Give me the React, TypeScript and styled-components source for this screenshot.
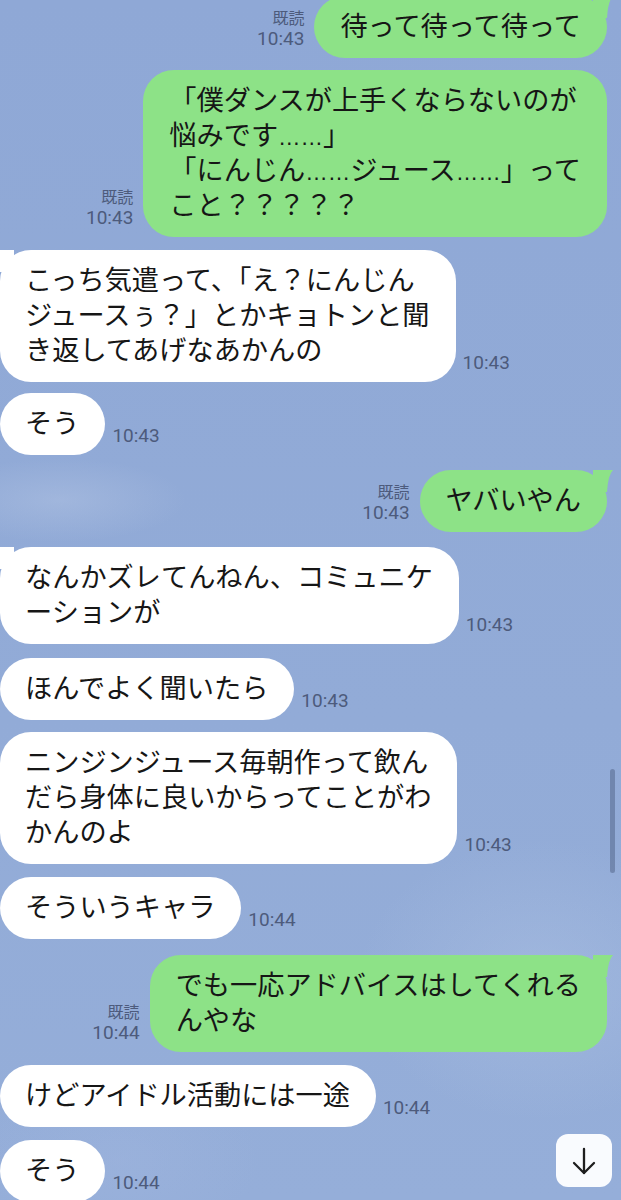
import React from "react";
import styled, { createGlobalStyle } from "styled-components";

const Global = createGlobalStyle`
  html, body { margin: 0; padding: 0; overflow: hidden; background: #91aad7; }
  * { box-sizing: border-box; }
`;

type Msg = {
  me: boolean;
  lines: string[];
  time: string;
  read?: boolean;
  tail?: boolean;
  gap: number;
};

const messages: Msg[] = [
  { me: true, lines: ["待って待って待って"], time: "10:43", read: true, tail: true, gap: 0 },
  {
    me: true,
    lines: ["「僕ダンスが上手くならないのが", "悩みです……」", "「にんじん……ジュース……」って", "こと？？？？？"],
    time: "10:43",
    read: true,
    gap: 12,
  },
  {
    me: false,
    lines: ["こっち気遣って、「え？にんじん", "ジュースぅ？」とかキョトンと聞", "き返してあげなあかんの"],
    time: "10:43",
    tail: true,
    gap: 13,
  },
  { me: false, lines: ["そう"], time: "10:43", gap: 11 },
  { me: true, lines: ["ヤバいやん"], time: "10:43", read: true, tail: true, gap: 15 },
  { me: false, lines: ["なんかズレてんねん、コミュニケ", "ーションが"], time: "10:43", tail: true, gap: 15 },
  { me: false, lines: ["ほんでよく聞いたら"], time: "10:43", gap: 14 },
  {
    me: false,
    lines: ["ニンジンジュース毎朝作って飲ん", "だら身体に良いからってことがわ", "かんのよ"],
    time: "10:43",
    gap: 12,
  },
  { me: false, lines: ["そういうキャラ"], time: "10:44", gap: 13 },
  { me: true, lines: ["でも一応アドバイスはしてくれる", "んやな"], time: "10:44", read: true, tail: true, gap: 16 },
  { me: false, lines: ["けどアイドル活動には一途"], time: "10:44", gap: 13 },
  { me: false, lines: ["そう"], time: "10:44", gap: 13 },
];

const Screen = styled.div`
  position: relative;
  width: 621px;
  height: 1200px;
  overflow: hidden;
  background:
    radial-gradient(ellipse 180px 60px at 60px 500px, rgba(190, 205, 232, 0.35), transparent 70%),
    radial-gradient(ellipse 260px 200px at 540px 980px, rgba(175, 195, 228, 0.45), transparent 70%),
    radial-gradient(ellipse 200px 120px at 120px 1160px, rgba(165, 185, 225, 0.3), transparent 70%),
    linear-gradient(180deg, #8fa8d6 0%, #92abd7 60%, #95aed9 100%);
`;

const Thread = styled.div`
  display: flex;
  flex-direction: column;
  margin-top: -4px;
`;

const Row = styled.div<{ $me: boolean; $gap: number }>`
  display: flex;
  flex-direction: ${(p) => (p.$me ? "row-reverse" : "row")};
  align-items: flex-end;
  justify-content: flex-start;
  gap: ${(p) => (p.$me ? 10 : 7)}px;
  margin-top: ${(p) => p.$gap}px;
  padding: ${(p) => (p.$me ? "0 14px 0 0" : "0")};
`;

const Bubble = styled.div<{ $me: boolean }>`
  position: relative;
  background: ${(p) => (p.$me ? "#8de287" : "#ffffff")};
  color: #161616;
  border-radius: 31px;
  padding: 10.5px 26px 16.5px ${(p) => (p.$me ? "26px" : "25px")};
  font-family: "Noto Sans CJK JP", "Noto Sans", sans-serif;
  font-size: 27.2px;
  line-height: 35px;
  white-space: nowrap;
`;

const Line = styled.div`
  display: block;
  height: 35px;
`;

const Ell = styled.span`
  font-family: "Liberation Sans", Arial, sans-serif;
  font-size: 22.5px;
  line-height: 1;
`;

const Tail = styled.svg<{ $me: boolean }>`
  position: absolute;
  top: 0;
  ${(p) => (p.$me ? "right: -6px;" : "left: -6px;")}
  width: 20px;
  height: 22px;
  fill: ${(p) => (p.$me ? "#8de287" : "#ffffff")};
`;

const Meta = styled.div<{ $me: boolean }>`
  display: flex;
  flex-direction: column;
  align-items: ${(p) => (p.$me ? "flex-end" : "flex-start")};
  padding-bottom: 8px;
  color: #4d5b7c;
`;

const Read = styled.span`
  font-family: "Noto Sans CJK JP", sans-serif;
  font-size: 16px;
  line-height: 22px;
`;

const Time = styled.span`
  font-family: "Roboto", "Liberation Sans", sans-serif;
  font-size: 19px;
  line-height: 22px;
`;

const ScrollDown = styled.div`
  position: absolute;
  left: 556px;
  top: 1134px;
  width: 56px;
  height: 53px;
  border-radius: 12px;
  background: rgba(252, 253, 255, 0.97);
  display: flex;
  align-items: center;
  justify-content: center;
  color: #1e1e1e;
`;

const ScrollThumb = styled.div`
  position: absolute;
  left: 610px;
  top: 769px;
  width: 5px;
  height: 104px;
  border-radius: 3px;
  background: rgba(72, 88, 125, 0.45);
`;

function renderLine(text: string) {
  const parts = text.split(/(…+)/);
  return parts.map((p, i) => (p.startsWith("…") ? <Ell key={i}>{p}</Ell> : <React.Fragment key={i}>{p}</React.Fragment>));
}

function Message({ m }: { m: Msg }) {
  return (
    <Row $me={m.me} $gap={m.gap}>
      <Bubble $me={m.me}>
        {m.tail && (
          <Tail $me={m.me} viewBox="0 0 20 22">
            {m.me ? <path d="M0 0 H20 Q15 5 14 22 H0 Z" /> : <path d="M20 0 H0 Q5 5 6 22 H20 Z" />}
          </Tail>
        )}
        {m.lines.map((l, i) => (
          <Line key={i}>{renderLine(l)}</Line>
        ))}
      </Bubble>
      <Meta $me={m.me}>
        {m.read && <Read>既読</Read>}
        <Time>{m.time}</Time>
      </Meta>
    </Row>
  );
}

export default function App() {
  return (
    <Screen>
      <Global />
      <Thread>
        {messages.map((m, i) => (
          <Message key={i} m={m} />
        ))}
      </Thread>
      <ScrollThumb />
      <ScrollDown>
        <svg width="26" height="30" viewBox="0 0 26 30" fill="none" stroke="currentColor" strokeWidth="2.3" strokeLinecap="round" strokeLinejoin="round">
          <path d="M13 3 V27" />
          <path d="M3 17 L13 27 L23 17" />
        </svg>
      </ScrollDown>
    </Screen>
  );
}
